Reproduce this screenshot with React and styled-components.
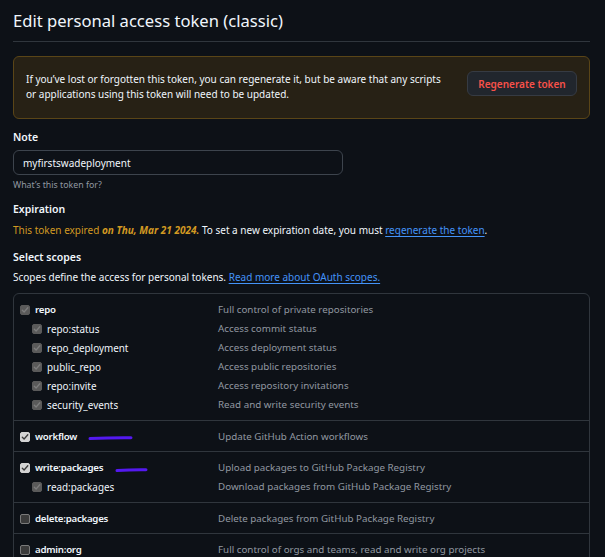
import React from "react";
import styled, { createGlobalStyle } from "styled-components";

const GlobalStyle = createGlobalStyle`
  html, body { margin: 0; padding: 0; overflow: hidden; background: #0d1117; }
  body {
    font-family: "Noto Sans", "Liberation Sans", sans-serif;
    font-size: 10px;
    color: #f0f6fc;
  }
  * { box-sizing: border-box; }
`;

const Page = styled.div`
  padding: 0 15px 0 13px;
`;

const Title = styled.h2`
  margin: 0;
  padding: 9px 0 8px;
  font-size: 16.6px;
  line-height: 24px;
  font-weight: 400;
  color: #f0f6fc;
  border-bottom: 1px solid #30363d;
`;

const Flash = styled.div`
  margin-top: 14px;
  display: flex;
  align-items: flex-start;
  justify-content: space-between;
  gap: 16px;
  padding: 15px 12px 16px 12px;
  background: #272115;
  border: 1px solid #5a4517;
  border-radius: 6px;
`;

const FlashText = styled.p`
  margin: 0;
  line-height: 15px;
  color: #f0f6fc;
  flex: 1;
`;

const DangerButton = styled.button`
  flex: none;
  width: 110px;
  height: 25px;
  margin-top: -1px;
  padding: 0 10px;
  background: #21262d;
  border: 1px solid #363b43;
  border-radius: 6px;
  color: #f85149;
  font-family: inherit;
  font-size: 10px;
  font-weight: 600;
`;

const Group = styled.div`
  margin-top: ${(p) => p.$top}px;
`;

const Label = styled.div`
  font-size: 10.5px;
  line-height: 15px;
  font-weight: 600;
  color: #f0f6fc;
`;

const Input = styled.input`
  display: block;
  margin-top: 5px;
  width: 330px;
  height: 25px;
  padding: 0 9px;
  background: #0d1117;
  border: 1px solid #3d444d;
  border-radius: 6px;
  color: #f0f6fc;
  font-family: inherit;
  font-size: 10px;
  outline: none;
`;

const Hint = styled.div`
  margin-top: 4px;
  font-size: 8.8px;
  line-height: 13px;
  color: #9198a1;
`;

const Text = styled.p`
  margin: ${(p) => p.$top}px 0 0;
  line-height: 15px;
  color: #f0f6fc;
`;

const Attention = styled.span`
  color: #d29922;
`;

const AttentionStrong = styled.strong`
  color: #d29922;
  font-style: italic;
  font-weight: 700;
`;

const Link = styled.a`
  color: #4493f8;
  text-decoration: underline;
  text-underline-offset: 2px;
`;

const ScopeBox = styled.div`
  margin-top: 8px;
  border: 1px solid #30363d;
  border-radius: 6px;
`;

const ScopeGroup = styled.div`
  padding: 6px 0 5.5px;
  & + & {
    border-top: 1px solid #30363d;
  }
`;

const ScopeRow = styled.div`
  display: grid;
  grid-template-columns: 198px 1fr;
  align-items: center;
  height: 19px;
  padding-left: 6px;
`;

const ScopeName = styled.label`
  display: flex;
  align-items: center;
  gap: 5px;
  padding-left: ${(p) => (p.$sub ? 12 : 0)}px;
  font-size: ${(p) => (p.$strong ? 9.7 : 9.9)}px;
  font-weight: ${(p) => (p.$strong ? 600 : 400)};
  letter-spacing: ${(p) => (p.$strong ? -0.25 : 0)}px;
  color: #f0f6fc;
  white-space: nowrap;
`;

const ScopeDesc = styled.span`
  font-size: 9.8px;
  color: #9198a1;
  white-space: nowrap;
`;

const boxStyles = {
  dim: { bg: "#5a5a5a", border: "#5a5a5a", check: "#7d7d7d" },
  on: { bg: "#d4d4d4", border: "#d4d4d4", check: "#3a3a3a" },
  off: { bg: "#3b3b3b", border: "#7a7a7a", check: "none" },
};

const Box = styled.span`
  flex: none;
  width: 10px;
  height: 10px;
  margin-top: 1px;
  border-radius: 2px;
  display: flex;
  align-items: center;
  justify-content: center;
  background: ${(p) => boxStyles[p.$state].bg};
  border: 1px solid ${(p) => boxStyles[p.$state].border};
`;

const Mark = styled.svg`
  margin-left: ${(p) => p.$gap}px;
  margin-top: 4px;
`;

function Checkbox({ state }) {
  const c = boxStyles[state].check;
  return (
    <Box $state={state}>
      {c !== "none" && (
        <svg width="8" height="8" viewBox="0 0 8 8">
          <path d="M1.3 4.2 L3.1 6 L6.8 1.8" fill="none" stroke={c} strokeWidth="1.3" strokeLinecap="round" strokeLinejoin="round" />
        </svg>
      )}
    </Box>
  );
}

function Scribble({ width, gap }) {
  return (
    <Mark $gap={gap} width={width} height="6" viewBox={`0 0 ${width} 6`}>
      <path d={`M2 3.6 Q ${width / 2} 2.6 ${width - 2} 2.8`} fill="none" stroke="#5419f0" strokeWidth="3" strokeLinecap="round" />
    </Mark>
  );
}

const groups = [
  [
    { name: "repo", desc: "Full control of private repositories", strong: true, state: "dim" },
    { name: "repo:status", desc: "Access commit status", sub: true, state: "dim" },
    { name: "repo_deployment", desc: "Access deployment status", sub: true, state: "dim" },
    { name: "public_repo", desc: "Access public repositories", sub: true, state: "dim" },
    { name: "repo:invite", desc: "Access repository invitations", sub: true, state: "dim" },
    { name: "security_events", desc: "Read and write security events", sub: true, state: "dim" },
  ],
  [{ name: "workflow", desc: "Update GitHub Action workflows", strong: true, state: "on", mark: { width: 45, gap: 6 } }],
  [
    { name: "write:packages", desc: "Upload packages to GitHub Package Registry", strong: true, state: "on", mark: { width: 33, gap: 7 } },
    { name: "read:packages", desc: "Download packages from GitHub Package Registry", sub: true, state: "dim" },
  ],
  [{ name: "delete:packages", desc: "Delete packages from GitHub Package Registry", strong: true, state: "off" }],
  [{ name: "admin:org", desc: "Full control of orgs and teams, read and write org projects", strong: true, state: "off" }],
];

export default function App() {
  return (
    <>
      <GlobalStyle />
      <Page>
        <Title>Edit personal access token (classic)</Title>

        <Flash>
          <FlashText>
            If you’ve lost or forgotten this token, you can regenerate it, but be aware that any scripts or
            applications using this token will need to be updated.
          </FlashText>
          <DangerButton>Regenerate token</DangerButton>
        </Flash>

        <Group $top={11}>
          <Label>Note</Label>
          <Input defaultValue="myfirstswadeployment" />
          <Hint>What’s this token for?</Hint>
        </Group>

        <Group $top={10}>
          <Label>Expiration</Label>
          <Text $top={6}>
            <Attention>This token expired </Attention>
            <AttentionStrong>on Thu, Mar 21 2024.</AttentionStrong> To set a new expiration date, you must{" "}
            <Link href="#">regenerate the token</Link>.
          </Text>
        </Group>

        <Group $top={12}>
          <Label>Select scopes</Label>
          <Text $top={5}>
            Scopes define the access for personal tokens. <Link href="#">Read more about OAuth scopes.</Link>
          </Text>
          <ScopeBox>
            {groups.map((g, i) => (
              <ScopeGroup key={i}>
                {g.map((s) => (
                  <ScopeRow key={s.name}>
                    <ScopeName $sub={s.sub} $strong={s.strong}>
                      <Checkbox state={s.state} />
                      {s.name}
                      {s.mark && <Scribble width={s.mark.width} gap={s.mark.gap} />}
                    </ScopeName>
                    <ScopeDesc>{s.desc}</ScopeDesc>
                  </ScopeRow>
                ))}
              </ScopeGroup>
            ))}
          </ScopeBox>
        </Group>
      </Page>
    </>
  );
}
